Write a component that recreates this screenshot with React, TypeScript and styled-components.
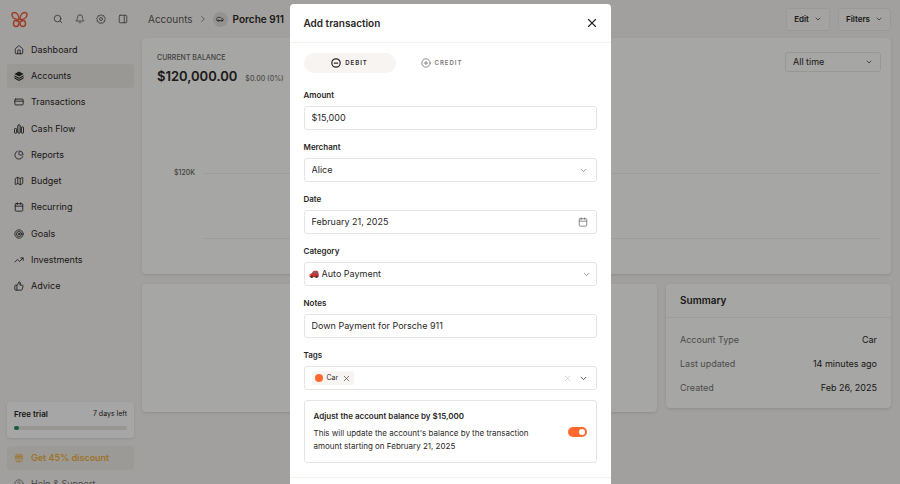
import React from 'react';
import styled, { createGlobalStyle, css } from 'styled-components';
import {
  Bell, Calendar, Car, ChartPie, ChevronDown, ChevronRight, CircleMinus, CirclePlus, CircleQuestionMark,
  CreditCard, Gift, House, Map as MapIcon, PanelRight, Search, Target, ThumbsUp, TrendingUp, X,
} from 'lucide-react';

const ink = '#2a2825';
const muted = '#777573';
const line = '#e6e4e1';
const faintLine = '#f3f2ef';
const accent = '#ff692d';

const GlobalStyle = createGlobalStyle`
  *, *::before, *::after { box-sizing: border-box; }
  body {
    margin: 0;
    overflow: hidden;
    background: #f9f6f3;
    color: ${ink};
    font: 400 9px/12px Inter, "Liberation Sans", sans-serif;
  }
  h1, h2, h3, p, ul, dl, dd { margin: 0; padding: 0; }
  ul { list-style: none; }
  button, input, select { font: inherit; color: inherit; margin: 0; }
  button { padding: 0; border: 0; background: none; cursor: pointer; }
  a { color: inherit; text-decoration: none; }
  svg { display: block; flex: none; }
`;

const Page = styled.div`
  display: grid;
  grid-template-columns: 142px 1fr;
  height: 100vh;
`;

/* Sidebar */
const Sidebar = styled.aside`
  display: flex;
  flex-direction: column;
  min-height: 0;
  padding: 0 8px 0 7px;
`;
const SidebarTop = styled.div`
  display: flex;
  align-items: center;
  height: 38px;
  padding-left: 4px;
`;
const Tools = styled.div`
  display: flex;
  flex: 1;
  justify-content: space-between;
  padding: 0 6px 0 25px;
  color: #55524e;
`;
const Nav = styled.ul`
  display: flex;
  flex-direction: column;
  justify-content: space-between;
  height: 260px;
`;
const NavLink = styled.a<{ $active?: boolean; $tone?: 'muted' | 'promo' }>`
  display: flex;
  align-items: center;
  gap: 7px;
  height: 24px;
  padding: 0 7px;
  border-radius: 3px;
  ${(p) => p.$active && css`background: #edeae5;`}
  ${(p) => p.$tone === 'muted' && css`color: ${muted};`}
  ${(p) => p.$tone === 'promo' && css`
    background: #f0ede9;
    color: #f0b23e;
    font-weight: 600;
  `}
`;
const SidebarFoot = styled.div`
  display: flex;
  flex-direction: column;
  margin: auto 0 -12px;
`;
const FootLinks = styled.div`
  display: grid;
  gap: 2px;
  margin-top: 8px;
`;
const Trial = styled.section`
  height: 36px;
  padding: 6px 7px;
  border-radius: 4px;
  background: #fff;
  box-shadow: 0 1px 3px rgba(0, 0, 0, 0.1);
`;
const TrialRow = styled.div`
  display: flex;
  justify-content: space-between;
  font-size: 7px;
  strong { font-size: 8px; font-weight: 600; }
`;
const Track = styled.div`
  height: 4px;
  margin-top: 6px;
  border-radius: 2px;
  background: #e8e6e2;
`;
const TrackFill = styled.div`
  height: 4px;
  border-radius: 2px;
  background: #2b8c5f;
`;

/* Main */
const Main = styled.main`
  min-width: 0;
  padding-right: 9px;
`;
const TopBar = styled.header`
  display: flex;
  align-items: center;
  gap: 8px;
  height: 38px;
  padding-left: 6px;
`;
const Crumbs = styled.nav`
  display: flex;
  flex: 1;
  align-items: center;
  gap: 5px;
  font-size: 10px;
  a { color: #5c5a57; }
  h1 { font-size: 10px; line-height: 12px; font-weight: 600; }
`;
const Avatar = styled.span`
  display: grid;
  place-items: center;
  width: 15px;
  height: 15px;
  border-radius: 50%;
  background: #e4e1dd;
`;
const TopButton = styled.button`
  display: flex;
  align-items: center;
  gap: 5px;
  height: 23px;
  padding: 0 7px;
  border: 1px solid #efece8;
  border-radius: 3px;
  background: #fdfbf8;
  font-size: 8px;
  font-weight: 600;
`;
const card = css`
  border-radius: 4px;
  background: #fffffc;
  box-shadow: 0 1px 3px rgba(0, 0, 0, 0.12);
`;
const ChartCard = styled.section`
  ${card}
  display: flex;
  flex-direction: column;
  height: 236px;
  padding: 14px 10px 29px 15px;
`;
const ChartHead = styled.div`
  display: flex;
  justify-content: space-between;
  align-items: flex-start;
`;
const Caption = styled.h2`
  font-size: 7px;
  line-height: 12px;
  font-weight: 500;
  color: #686562;
  text-transform: uppercase;
`;
const Balance = styled.p`
  display: flex;
  align-items: baseline;
  gap: 8px;
  font-size: 13px;
  line-height: 24px;
  font-weight: 600;
  span { font-size: 7px; font-weight: 500; color: ${muted}; }
`;
const RangeBox = styled.div`
  display: flex;
  align-items: center;
  width: 96px;
  height: 20px;
  padding: 0 7px;
  border: 1px solid #eae8e5;
  border-radius: 3px;
`;
const Plot = styled.div`
  display: flex;
  flex-direction: column;
  gap: 51px;
  margin-top: auto;
  padding-left: 17px;
`;
const Tick = styled.div`
  display: grid;
  grid-template-columns: 22px 1fr;
  gap: 7px;
  align-items: center;
  height: 14px;
  font-size: 7px;
  font-weight: 500;
  color: #686562;
  &::after { content: ''; height: 1px; background: ${faintLine}; }
`;
const Lower = styled.div`
  display: grid;
  grid-template-columns: 1fr 225px;
  gap: 9px;
  align-items: start;
  margin-top: 10px;
`;
const BlankCard = styled.section`
  ${card}
  height: 128px;
`;
const SummaryCard = styled.section`
  ${card}
  h2 {
    padding: 10px 14px 11px;
    border-bottom: 1px solid ${faintLine};
    font-size: 10px;
    line-height: 12px;
    font-weight: 600;
  }
`;
const Facts = styled.dl`
  display: grid;
  gap: 12px;
  padding: 16px 14px 14px;
`;
const Fact = styled.div`
  display: flex;
  justify-content: space-between;
  dt { color: ${muted}; }
`;

/* Dialog */
const Backdrop = styled.div`
  position: fixed;
  inset: 0;
  display: flex;
  justify-content: center;
  align-items: flex-start;
  padding-top: 4px;
  overflow: hidden;
  background: rgba(0, 0, 0, 0.35);
`;
const Dialog = styled.section`
  width: min(321px, 100%);
  border-radius: 4px;
  background: #fff;
`;
const DialogHead = styled.header`
  display: flex;
  align-items: center;
  justify-content: space-between;
  height: 39px;
  padding: 0 12px 0 14px;
  border-bottom: 1px solid ${faintLine};
  h2 { font-size: 10px; font-weight: 600; }
`;
const DialogBody = styled.form`
  display: flex;
  flex-direction: column;
  gap: 10px;
  padding: 10px 14px 14px;
`;
const DialogFoot = styled.footer`
  height: 48px;
  border-top: 1px solid ${faintLine};
`;
const Tabs = styled.div`
  display: flex;
  margin-bottom: 5px;
`;
const Tab = styled.button<{ $active?: boolean }>`
  display: flex;
  align-items: center;
  justify-content: center;
  gap: 4px;
  width: 92px;
  height: 20px;
  border-radius: 10px;
  font-size: 6px;
  font-weight: 600;
  letter-spacing: 1px;
  color: ${(p) => (p.$active ? ink : muted)};
  background: ${(p) => (p.$active ? '#f7f4f2' : 'transparent')};
`;
const FieldWrap = styled.div`
  display: grid;
  gap: 4px;
  label { font-size: 8px; line-height: 14px; font-weight: 600; }
`;
const Control = styled.div<{ $tight?: boolean }>`
  display: flex;
  align-items: center;
  gap: 3px;
  height: 24px;
  padding: ${(p) => (p.$tight ? '0 5px 0 4px' : '0 8px 0 7px')};
  border: 1px solid ${line};
  border-radius: 3px;
`;
const plainControl = css`
  flex: 1;
  min-width: 0;
  padding: 0;
  border: 0;
  outline: 0;
  background: none;
`;
const Input = styled.input`${plainControl}`;
const Select = styled.select`
  ${plainControl}
  appearance: none;
`;
const IconButton = styled.button<{ $tone?: string }>`
  display: grid;
  place-items: center;
  color: ${(p) => p.$tone ?? ink};
`;
const Chip = styled.span`
  display: flex;
  align-items: center;
  gap: 4px;
  height: 14px;
  padding: 0 3px;
  border-radius: 2px;
  background: #f7f4f2;
  font-size: 7px;
  &::before {
    content: '';
    width: 8px;
    height: 8px;
    border-radius: 50%;
    background: ${accent};
  }
`;
const TagActions = styled.div`
  display: flex;
  gap: 7px;
`;
const AdjustBox = styled.div`
  display: flex;
  align-items: center;
  gap: 12px;
  padding: 9px;
  border: 1px solid ${line};
  border-radius: 3px;
  font-size: 8px;
`;
const AdjustText = styled.div`
  flex: 1;
  label { display: block; margin-bottom: 5px; font-weight: 600; }
  p { line-height: 13px; }
`;
const Toggle = styled.input`
  appearance: none;
  display: flex;
  justify-content: flex-end;
  align-items: center;
  width: 19px;
  height: 10px;
  margin: 0;
  padding: 0 2px;
  border-radius: 5px;
  background: #c9c6c2;
  &:not(:checked) { justify-content: flex-start; }
  &:checked { background: ${accent}; }
  &::before {
    content: '';
    width: 6px;
    height: 6px;
    border-radius: 50%;
    background: #fff;
  }
`;

const Logo = () => (
  <svg width="17" height="17" viewBox="0 0 34 34" fill="none" stroke="#f0603c" strokeWidth="3" strokeLinejoin="round" strokeLinecap="round" role="img" aria-label="Home">
    <path d="M16 17C16 9 12 3 6 3 2 3 1 7 3 11c2 4 6 6 13 6z" />
    <path d="M18 17c0-8 4-14 10-14 4 0 5 4 3 8-2 4-6 6-13 6z" />
    <path d="M13 18c-5 0-8 2-8 7 0 4 2 6 5 6 5 0 6-4 6-8 0-3-2-4-4-2" />
    <path d="M21 18c5 0 8 2 8 7 0 4-2 6-5 6-5 0-6-4-6-8 0-3 2-4 4-2" />
  </svg>
);
const Gear = () => (
  <svg width="10" height="10" viewBox="0 0 24 24" fill="none" stroke="currentColor" strokeWidth="2" strokeLinejoin="round">
    <path d="M12 1.5l3 2.6 4-.2.7 3.9 3 2.7-2 3.5.6 4-3.800 1.200-2 3.300-3.500-1.400-3.500 1.400-2-3.300-3.800-1.200.6-4-2-3.500 3-2.700.7-3.900 4 .2z" />
    <circle cx="12" cy="12" r="3.6" />
  </svg>
);
const Stack = () => (
  <svg width="10" height="10" viewBox="0 0 24 24" fill="currentColor">
    <path d="M12 1 1 7l11 6 11-6z" />
    <path d="m1 10 11 6 11-6v3l-11 6-11-6z" />
    <path d="m1 15 11 6 11-6v3l-11 6-11-6z" />
  </svg>
);
const Bars = () => (
  <svg width="10" height="10" viewBox="0 0 24 24" fill="none" stroke="currentColor" strokeWidth="2.4">
    <rect x="1" y="11" width="5.500" height="11" rx="2" />
    <rect x="9.250" y="2" width="5.500" height="20" rx="2" />
    <rect x="17.500" y="7" width="5.500" height="15" rx="2" />
  </svg>
);
const RedCar = () => (
  <svg width="10" height="10" viewBox="0 0 20 20">
    <path d="M1 12c0-2 2-3 4-3l3-4c1-1 2-1.500 4-1.500h3c2 0 3 1 3.500 3l1 4v4.500c0 1-1 1.500-2 1.500H3c-1.500 0-2-1-2-2z" fill="#d3302f" />
    <path d="M7 9l2.500-3.200c.5-.6 1-.8 2-.8h.8v4zM13.500 5H15c1 0 1.500.5 2 1.500L17.500 9h-4z" fill="#66747c" />
    <circle cx="5.500" cy="15.500" r="2.500" fill="#35393c" />
    <circle cx="15" cy="15.500" r="2.500" fill="#35393c" />
    <rect x="1" y="11" width="2.500" height="2" fill="#f6c65b" />
  </svg>
);

const navItems = [
  { label: 'Dashboard', icon: <House size={10} /> },
  { label: 'Accounts', icon: <Stack />, active: true },
  { label: 'Transactions', icon: <CreditCard size={10} /> },
  { label: 'Cash Flow', icon: <Bars /> },
  { label: 'Reports', icon: <ChartPie size={10} /> },
  { label: 'Budget', icon: <MapIcon size={10} /> },
  { label: 'Recurring', icon: <Calendar size={10} /> },
  { label: 'Goals', icon: <Target size={10} /> },
  { label: 'Investments', icon: <TrendingUp size={10} /> },
  { label: 'Advice', icon: <ThumbsUp size={10} /> },
];

const facts = [
  ['Account Type', 'Car'],
  ['Last updated', '14 minutes ago'],
  ['Created', 'Feb 26, 2025'],
];

function Field({ id, label, tight, children }: { id: string; label: string; tight?: boolean; children: React.ReactNode }) {
  return (
    <FieldWrap>
      <label htmlFor={id}>{label}</label>
      <Control $tight={tight}>{children}</Control>
    </FieldWrap>
  );
}

function AddTransaction() {
  return (
    <Backdrop>
      <Dialog role="dialog" aria-modal="true" aria-labelledby="dialog-title">
        <DialogHead>
          <h2 id="dialog-title">Add transaction</h2>
          <IconButton aria-label="Close"><X size={14} /></IconButton>
        </DialogHead>
        <DialogBody>
          <Tabs>
            <Tab type="button" $active><CircleMinus size={10} strokeWidth={3} />DEBIT</Tab>
            <Tab type="button"><CirclePlus size={10} />CREDIT</Tab>
          </Tabs>
          <Field id="amount" label="Amount">
            <Input id="amount" defaultValue="$15,000" />
          </Field>
          <Field id="merchant" label="Merchant">
            <Select id="merchant"><option>Alice</option></Select>
            <ChevronDown size={9} color={muted} />
          </Field>
          <Field id="date" label="Date">
            <Input id="date" defaultValue="February 21, 2025" />
            <IconButton type="button" aria-label="Pick a date" $tone={muted}><Calendar size={10} /></IconButton>
          </Field>
          <Field id="category" label="Category" tight>
            <RedCar />
            <Select id="category"><option>Auto Payment</option></Select>
            <ChevronDown size={9} color={muted} />
          </Field>
          <Field id="notes" label="Notes">
            <Input id="notes" defaultValue="Down Payment for Porsche 911" />
          </Field>
          <Field id="tags" label="Tags">
            <Chip>
              Car
              <IconButton type="button" aria-label="Remove Car" $tone="#55524e"><X size={9} /></IconButton>
            </Chip>
            <Input id="tags" />
            <TagActions>
              <IconButton type="button" aria-label="Clear tags" $tone="#c9c7c4"><X size={9} /></IconButton>
              <IconButton type="button" aria-label="Show tags"><ChevronDown size={9} /></IconButton>
            </TagActions>
          </Field>
          <AdjustBox>
            <AdjustText>
              <label htmlFor="adjust">Adjust the account balance by $15,000</label>
              <p>This will update the account's balance by the transaction amount starting on February 21, 2025</p>
            </AdjustText>
            <Toggle id="adjust" type="checkbox" defaultChecked />
          </AdjustBox>
        </DialogBody>
        <DialogFoot />
      </Dialog>
    </Backdrop>
  );
}

export default function App() {
  const trialProgress = 4;
  return (
    <>
      <GlobalStyle />
      <Page>
        <Sidebar>
          <SidebarTop>
            <Logo />
            <Tools>
              <IconButton aria-label="Search" $tone="inherit"><Search size={10} /></IconButton>
              <IconButton aria-label="Notifications" $tone="inherit"><Bell size={10} /></IconButton>
              <IconButton aria-label="Settings" $tone="inherit"><Gear /></IconButton>
              <IconButton aria-label="Toggle panel" $tone="inherit"><PanelRight size={10} /></IconButton>
            </Tools>
          </SidebarTop>
          <Nav>
            {navItems.map((n) => (
              <li key={n.label}>
                <NavLink href="#" $active={n.active}>{n.icon}{n.label}</NavLink>
              </li>
            ))}
          </Nav>
          <SidebarFoot>
            <Trial>
              <TrialRow><strong>Free trial</strong><span>7 days left</span></TrialRow>
              <Track><TrackFill style={{ width: `${trialProgress}%` }} /></Track>
            </Trial>
            <FootLinks>
              <NavLink href="#" $tone="promo"><Gift size={10} />Get 45% discount</NavLink>
              <NavLink href="#" $tone="muted"><CircleQuestionMark size={10} />Help &amp; Support</NavLink>
            </FootLinks>
          </SidebarFoot>
        </Sidebar>
        <Main>
          <TopBar>
            <Crumbs aria-label="Breadcrumb">
              <a href="#">Accounts</a>
              <ChevronRight size={10} color={muted} />
              <Avatar><Car size={8} /></Avatar>
              <h1>Porche 911</h1>
            </Crumbs>
            <TopButton>Edit<ChevronDown size={8} /></TopButton>
            <TopButton>Filters<ChevronDown size={8} /></TopButton>
          </TopBar>
          <ChartCard>
            <ChartHead>
              <div>
                <Caption>Current balance</Caption>
                <Balance>$120,000.00<span>$0.00 (0%)</span></Balance>
              </div>
              <RangeBox>
                <Select aria-label="Date range"><option>All time</option></Select>
                <ChevronDown size={8} />
              </RangeBox>
            </ChartHead>
            <Plot>
              <Tick>$120K</Tick>
              <Tick><span /></Tick>
            </Plot>
          </ChartCard>
          <Lower>
            <BlankCard />
            <SummaryCard>
              <h2>Summary</h2>
              <Facts>
                {facts.map(([k, v]) => (
                  <Fact key={k}><dt>{k}</dt><dd>{v}</dd></Fact>
                ))}
              </Facts>
            </SummaryCard>
          </Lower>
        </Main>
      </Page>
      <AddTransaction />
    </>
  );
}
